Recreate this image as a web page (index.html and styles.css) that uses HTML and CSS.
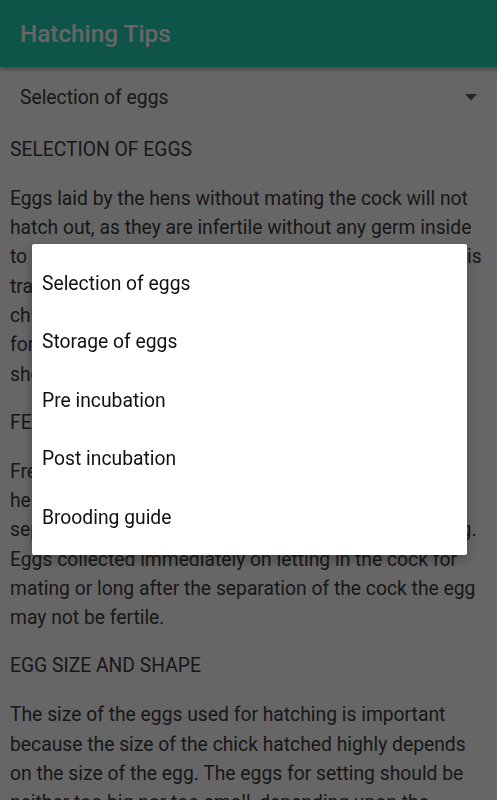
FILE: index.html
```html
<!DOCTYPE html>
<html>
<head>
<meta charset="utf-8">
<link rel="stylesheet" href="styles.css">
</head>
<body>
<div class="app">
  <header class="toolbar">
    <h1 class="title">Hatching Tips</h1>
  </header>
  <div class="spinner">
    <span class="spinner-text">Selection of eggs</span>
    <svg class="arrow" width="12" height="7" viewBox="0 0 12 7"><path d="M0 0H12L6 6.5Z" fill="#5a5a5a"/></svg>
  </div>
  <main class="content">
    <h2 class="heading">SELECTION OF EGGS</h2>
    <p class="para">Eggs laid by the hens without mating the cock will not hatch out, as they are infertile without any germ inside to develop into a chick. Only eggs in which the sperm is transferred from the cock by mating will develop into chicks. So the hens should be mated with a cock first for hatching eggs of good quality. Only fertile eggs should be set for hatching.</p>
    <h2 class="heading">FERTILITY</h2>
    <p class="para">Fresh eggs should be collected 7 to 10 days after the hens are mated with the cock and up to 3 weeks after separation of the cock from the hen for good hatching. Eggs collected immediately on letting in the cock for mating or long after the separation of the cock the egg may not be fertile.</p>
    <h2 class="heading">EGG SIZE AND SHAPE</h2>
    <p class="para">The size of the eggs used for hatching is important because the size of the chick hatched highly depends on the size of the egg. The eggs for setting should be neither too big nor too small, depending upon the requirement of the breed.</p>
  </main>
</div>
<div class="scrim"></div>
<div class="dialog">
  <div class="item">Selection of eggs</div>
  <div class="item">Storage of eggs</div>
  <div class="item">Pre incubation</div>
  <div class="item">Post incubation</div>
  <div class="item">Brooding guide</div>
</div>
</body>
</html>
```
FILE: styles.css
```css
html, body {
  margin: 0;
  padding: 0;
  background: #ffffff;
  font-family: Roboto, "Liberation Sans", sans-serif;
  overflow: hidden;
}
.app {
  width: 497px;
  height: 800px;
  overflow: hidden;
}
.toolbar {
  height: 67px;
  background: #23d2b6;
  display: flex;
  align-items: center;
  padding-left: 20px;
  box-shadow: 0 2px 5px rgba(0,0,0,0.35);
  position: relative;
  z-index: 1;
}
.title {
  margin: 0;
  font-size: 24.3px;
  font-weight: 500;
  color: #ffffff;
}
.spinner {
  height: 60px;
  display: flex;
  align-items: center;
  justify-content: space-between;
  padding: 0 20px 0 20px;
}
.spinner-text {
  font-size: 19.3px;
  color: #3c3c3c;
}
.arrow {
  display: block;
}
.content {
  padding: 8px 10px 0 10px;
}
.heading {
  margin: 0 0 19.5px 0;
  font-size: 19.3px;
  font-weight: 400;
  line-height: 29.3px;
  color: #3c3c3c;
}
.para {
  margin: 0 0 19px 0;
  font-size: 19.3px;
  line-height: 29.3px;
  color: #3c3c3c;
}
.scrim {
  position: fixed;
  inset: 0;
  background: rgba(0,0,0,0.6);
  z-index: 5;
}
.dialog {
  position: fixed;
  left: 32px;
  top: 244px;
  width: 435px;
  box-sizing: border-box;
  padding: 10px 0 8px 0;
  background: #ffffff;
  border-radius: 2px;
  box-shadow: 0 4px 12px rgba(0,0,0,0.3);
  z-index: 6;
}
.item {
  height: 58.5px;
  display: flex;
  align-items: center;
  padding-left: 10px;
  font-size: 19.3px;
  color: #111111;
}
```
